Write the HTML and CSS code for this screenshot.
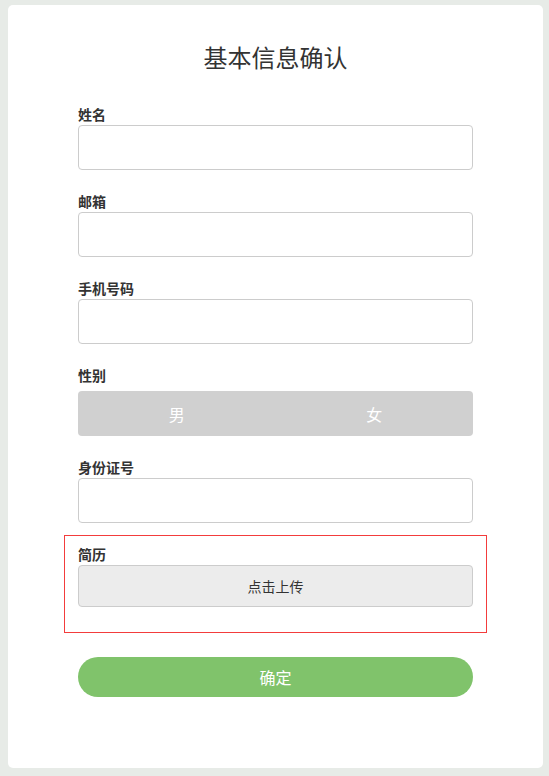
FILE: index.html
```html
<!DOCTYPE html>
<html lang="zh">
<head>
<meta charset="utf-8">
<title>基本信息确认</title>
<link rel="stylesheet" href="styles.css">
</head>
<body>
<div class="card">
  <h1 class="title">基本信息确认</h1>
  <form class="form">
    <div class="group">
      <label class="label">姓名</label>
      <input class="input" type="text">
    </div>
    <div class="group">
      <label class="label">邮箱</label>
      <input class="input" type="text">
    </div>
    <div class="group">
      <label class="label">手机号码</label>
      <input class="input" type="text">
    </div>
    <div class="group">
      <label class="label label-gap">性别</label>
      <div class="toggle">
        <span class="opt">男</span>
        <span class="opt">女</span>
      </div>
    </div>
    <div class="group">
      <label class="label">身份证号</label>
      <input class="input" type="text">
    </div>
    <div class="group group-upload">
      <label class="label">简历</label>
      <div class="upload">点击上传</div>
    </div>
    <button type="button" class="submit">确定</button>
  </form>
</div>
</body>
</html>
```
FILE: styles.css
```css
* { box-sizing: border-box; }
html, body { margin: 0; }
body {
  background: #e7ebe7;
  padding: 5px 6px 8px 8px;
  font-family: "Noto Sans CJK SC", "Noto Sans", sans-serif;
  color: #333;
}
.card {
  background: #fff;
  border-radius: 5px;
  height: 763px;
  padding: 36px 70px 0;
}
.title {
  margin: 0;
  font-size: 24px;
  line-height: 32px;
  font-weight: 400;
  text-align: center;
  color: #333;
}
.form {
  margin-top: 33px;
  display: flex;
  flex-direction: column;
}
.group {
  display: flex;
  flex-direction: column;
  margin-bottom: 23px;
}
.label {
  font-size: 14px;
  line-height: 17px;
  font-weight: 700;
  color: #333;
  margin-bottom: 2px;
}
.label-gap { margin-bottom: 7px; }
.input {
  height: 45px;
  border: 1px solid #cccccc;
  border-radius: 4px;
  background: #fff;
  font: inherit;
  padding: 0 10px;
  outline: none;
}
.toggle {
  height: 45px;
  border-radius: 4px;
  background: #d0d0d0;
  display: flex;
}
.opt {
  flex: 1;
  display: flex;
  align-items: center;
  justify-content: center;
  color: #fff;
  font-size: 16px;
}
.group-upload {
  margin: -11px -14px 24px;
  border: 1px solid #f33c3c;
  padding: 10px 13px 25px;
}
.upload {
  height: 42px;
  border: 1px solid #cccccc;
  border-radius: 4px;
  background: #ececec;
  display: flex;
  align-items: center;
  justify-content: center;
  font-size: 14px;
  color: #333;
}
.submit {
  height: 40px;
  border: none;
  border-radius: 20px;
  background: #80c36b;
  color: #fff;
  font: inherit;
  font-size: 16px;
  cursor: pointer;
}
```
